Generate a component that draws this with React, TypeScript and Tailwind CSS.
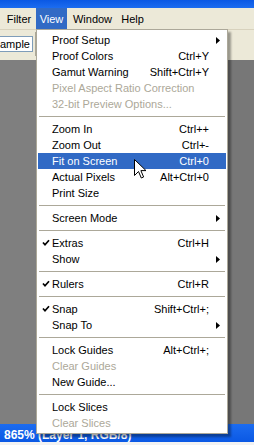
import React from "react";

type Item =
  | { sep: true }
  | {
      sep?: false;
      label: string;
      shortcut?: string;
      disabled?: boolean;
      checked?: boolean;
      submenu?: boolean;
      active?: boolean;
    };

const items: Item[] = [
  { label: "Proof Setup", submenu: true },
  { label: "Proof Colors", shortcut: "Ctrl+Y" },
  { label: "Gamut Warning", shortcut: "Shift+Ctrl+Y" },
  { label: "Pixel Aspect Ratio Correction", disabled: true },
  { label: "32-bit Preview Options...", disabled: true },
  { sep: true },
  { label: "Zoom In", shortcut: "Ctrl++" },
  { label: "Zoom Out", shortcut: "Ctrl+-" },
  { label: "Fit on Screen", shortcut: "Ctrl+0", active: true },
  { label: "Actual Pixels", shortcut: "Alt+Ctrl+0" },
  { label: "Print Size" },
  { sep: true },
  { label: "Screen Mode", submenu: true },
  { sep: true },
  { label: "Extras", shortcut: "Ctrl+H", checked: true },
  { label: "Show", submenu: true },
  { sep: true },
  { label: "Rulers", shortcut: "Ctrl+R", checked: true },
  { sep: true },
  { label: "Snap", shortcut: "Shift+Ctrl+;", checked: true },
  { label: "Snap To", submenu: true },
  { sep: true },
  { label: "Lock Guides", shortcut: "Alt+Ctrl+;" },
  { label: "Clear Guides", disabled: true },
  { label: "New Guide..." },
  { sep: true },
  { label: "Lock Slices" },
  { label: "Clear Slices", disabled: true },
];

function Check() {
  return (
    <svg width="8" height="8" viewBox="0 0 8 8" className="block">
      <path d="M1 3.5 L3 5.8 L7 1.2" fill="none" stroke="currentColor" strokeWidth="1.7" />
    </svg>
  );
}

function Arrow({ white }: { white?: boolean }) {
  return (
    <svg width="4" height="7" viewBox="0 0 4 7" className="block">
      <path d="M0 0 L4 3.5 L0 7 Z" fill={white ? "#fff" : "#000"} />
    </svg>
  );
}

function Cursor() {
  return (
    <svg width="13" height="21" viewBox="0 0 13 21" className="absolute left-[134px] top-[159px]">
      <path
        d="M0.5 0.5 L0.5 16.5 L4.5 12.5 L7.3 19 L9.6 18 L6.9 11.6 L12 11.6 Z"
        fill="#fff"
        stroke="#000"
        strokeWidth="1"
      />
    </svg>
  );
}

function ViewMenu() {
  return (
    <div className="absolute left-[36px] top-[29px] w-[192px] bg-white border border-[#aca899] p-px pt-[2px] pb-[2px] shadow-[3px_3px_2px_rgba(0,0,0,0.35)]">
      {items.map((it, i) =>
        it.sep ? (
          <div key={i} className="h-[9px] flex items-center px-px">
            <div className="h-px w-full bg-[#aca899]" />
          </div>
        ) : (
          <div
            key={i}
            className={`h-4 flex items-center ${
              it.active ? "bg-[#316ac5] text-white" : it.disabled ? "text-[#aca899]" : "text-black"
            }`}
          >
            <div className="w-[14px] flex justify-center pl-[2px]">{it.checked && <Check />}</div>
            <div className="flex-1 whitespace-nowrap overflow-hidden">{it.label}</div>
            {it.shortcut && <div className="whitespace-nowrap">{it.shortcut}</div>}
            <div className="w-[17px] flex justify-end pr-[6px]">
              {it.submenu && <Arrow white={it.active} />}
            </div>
          </div>
        )
      )}
    </div>
  );
}

export default function App() {
  return (
    <div
      className="relative w-[254px] h-[445px] overflow-hidden flex flex-col bg-[#808080] text-[11px] leading-4"
      style={{ fontFamily: '"Liberation Sans", Arial, sans-serif' }}
    >
      <div className="h-2 bg-gradient-to-b from-[#0a58e4] to-[#1c6cf0]" />
      <div className="h-[21px] bg-[#ece9d8] flex items-stretch text-black">
        <div className="w-9 flex items-center justify-center pl-[2px]">Filter</div>
        <div className="w-[31px] flex items-center justify-center bg-[#316ac5] text-white">View</div>
        <div className="w-[47px] flex items-center justify-center pl-1">Window</div>
        <div className="w-[34px] flex items-center justify-center pl-[3px]">Help</div>
      </div>
      <div className="h-[31px] bg-[#ece9d8] border-t border-[#d8d2bd] flex items-start">
        <div className="mt-[6px] h-4 w-[33px] bg-white border border-[#7f9db9] border-l-0 flex items-center overflow-hidden text-black">
          ample
        </div>
        <div className="ml-[2px] mt-[2px] h-6 w-px bg-[#aca899]" />
      </div>
      <div className="flex-1 bg-[#808080] flex">
        <div className="w-[36px] bg-[#7f7f7f]" />
        <div className="flex-1 bg-[#777777]" />
      </div>
      <div className="h-[18px] bg-gradient-to-b from-[#1c6cf0] to-[#0a58e4] text-white font-bold text-[12px] leading-[13px] pl-[4px] pt-[5px] whitespace-nowrap">
        865% (Layer 1, RGB/8)
      </div>
      <div className="h-[3px] bg-[#f2f2f2]" />
      <ViewMenu />
      <Cursor />
    </div>
  );
}
